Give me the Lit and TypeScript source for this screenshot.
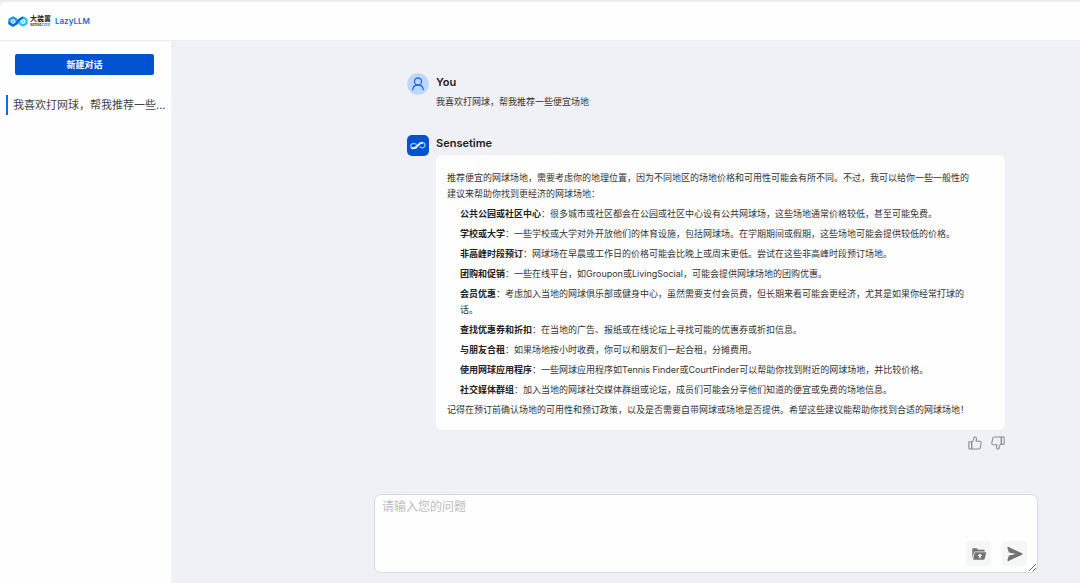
import { LitElement, html, css, svg } from "lit";
import { customElement, state } from "lit/decorators.js";

const logoMark = svg`
  <path d="M1.500 3.500 5 1.500l3.500 2v4L5 9.500l-3.500-2z" fill="#d9eefb" stroke="#1795e8" stroke-width="2.200" stroke-linejoin="round"/>
  <path d="M11.500 3.500l3.500-2 3.500 2v4l-3.500 2-3.500-2z" fill="#dcf6fb" stroke="#21c5ea" stroke-width="2.200" stroke-linejoin="round"/>
  <path d="M1.500 5.500v2l3.500 2 3.500-2 3-4 3.500-2" fill="none" stroke="#1267d8" stroke-width="2.200" stroke-linejoin="round"/>
  <circle cx="5" cy="5.500" r="1" fill="#5fa6c4"/><circle cx="15" cy="5.500" r="1" fill="#6fc6de"/>`;

const thumb = svg`
  <path d="M1 6.500h3.200v8.300H1.700a.7.7 0 0 1-.7-.7z"/>
  <path d="M4.200 6.800C6 6 6.500 4.800 6.700 3.200l.2-1.300c.2-1.300 2.400-1.100 2.700.6.2 1.100.1 2.300-.4 3.500h4.200c1.200 0 1.900.9 1.700 2l-1 5.100c-.2 1-1 1.700-2.100 1.700H4.200z"/>`;

interface Tip {
  label: string;
  text: string;
}

@customElement("chat-message")
export class ChatMessage extends LitElement {
  static properties = { name: {} };
  declare name: string;

  static styles = css`
    :host {
      display: grid;
      grid-template-columns: 22px minmax(0, 1fr);
      column-gap: 7px;
    }
    .name {
      margin: 0 0 3px;
      font-size: 11px;
      line-height: 18px;
      font-weight: 600;
      color: #1c1c1e;
    }
  `;

  render() {
    return html`
      <slot name="avatar"></slot>
      <div>
        <h2 class="name">${this.name}</h2>
        <slot></slot>
      </div>
    `;
  }
}

@customElement("app-root")
export class AppRoot extends LitElement {
  @state() private chats = ["我喜欢打网球，帮我推荐一些便宜场地"];

  private tips: Tip[] = [
    { label: "公共公园或社区中心", text: "很多城市或社区都会在公园或社区中心设有公共网球场，这些场地通常价格较低，甚至可能免费。" },
    { label: "学校或大学", text: "一些学校或大学对外开放他们的体育设施，包括网球场。在学期期间或假期，这些场地可能会提供较低的价格。" },
    { label: "非高峰时段预订", text: "网球场在早晨或工作日的价格可能会比晚上或周末更低。尝试在这些非高峰时段预订场地。" },
    { label: "团购和促销", text: "一些在线平台，如Groupon或LivingSocial，可能会提供网球场地的团购优惠。" },
    { label: "会员优惠", text: "考虑加入当地的网球俱乐部或健身中心，虽然需要支付会员费，但长期来看可能会更经济，尤其是如果你经常打球的话。" },
    { label: "查找优惠券和折扣", text: "在当地的广告、报纸或在线论坛上寻找可能的优惠券或折扣信息。" },
    { label: "与朋友合租", text: "如果场地按小时收费，你可以和朋友们一起合租，分摊费用。" },
    { label: "使用网球应用程序", text: "一些网球应用程序如Tennis Finder或CourtFinder可以帮助你找到附近的网球场地，并比较价格。" },
    { label: "社交媒体群组", text: "加入当地的网球社交媒体群组或论坛，成员们可能会分享他们知道的便宜或免费的场地信息。" },
  ];

  static styles = css`
    :host {
      display: flex;
      flex-direction: column;
      min-height: 100vh;
      box-sizing: border-box;
      border-top: 2px solid #ececee;
      background: #ececee;
      font-family: Inter, "Noto Sans CJK SC", sans-serif;
      font-size: 9px;
      line-height: 16px;
      color: #333;
    }
    * {
      box-sizing: border-box;
    }
    button,
    textarea {
      font-family: inherit;
    }
    .topbar {
      display: flex;
      align-items: center;
      height: 39px;
      padding: 0 8px;
      background: #fefefe;
      border-bottom: 1px solid #ededf0;
      border-top-left-radius: 5px;
    }
    .brand {
      display: flex;
      align-items: center;
      color: #222;
      text-decoration: none;
    }
    .mark {
      width: 20px;
      height: 11px;
      margin-right: 2px;
    }
    .vendor {
      display: flex;
      flex-direction: column;
      gap: 1px;
      width: 22px;
      font-size: 7px;
      line-height: 7px;
      font-weight: 600;
    }
    .vendor-sub {
      font-size: 4px;
      line-height: 4px;
    }
    .vendor-accent {
      color: #2a7be8;
    }
    .product {
      margin-left: 3px;
      font-size: 8px;
      line-height: 12px;
      font-weight: 600;
      color: #2368e4;
    }
    .body {
      display: flex;
      flex: 1;
    }
    .sidebar {
      flex: none;
      width: 171px;
      padding: 13px 4px 0 6px;
      background: #fefefe;
    }
    .new-chat {
      display: block;
      width: 139px;
      height: 21px;
      margin: 0 0 20px 9px;
      padding: 0;
      border: 0;
      border-radius: 2px;
      background: #0052d1;
      color: #fff;
      font-size: 9px;
      line-height: 21px;
      font-weight: 600;
    }
    .chats {
      margin: 0;
      padding: 0;
      list-style: none;
    }
    .chat {
      display: block;
      height: 20px;
      padding-left: 5px;
      border-left: 2px solid #1668f0;
      overflow: hidden;
      white-space: nowrap;
      text-overflow: ellipsis;
      font-size: 11px;
      line-height: 20px;
      color: #444;
      text-decoration: none;
    }
    .main {
      display: flex;
      flex: 1;
      flex-direction: column;
      justify-content: space-between;
      min-width: 0;
      padding: 32px 42px 10px 203px;
      background: #f0f1f6;
    }
    .thread {
      display: flex;
      flex-direction: column;
      gap: 24px;
      padding: 0 33px;
    }
    .avatar {
      width: 22px;
      height: 22px;
    }
    .text {
      margin: 0;
    }
    .card {
      padding: 15px 31px 12px 11px;
      border-radius: 6px;
      background: #fefefe;
    }
    .tips {
      margin: 4px 0;
      padding: 0 0 0 13px;
      list-style: none;
      display: flex;
      flex-direction: column;
      gap: 4px;
    }
    .label {
      font-weight: 700;
      color: #222;
    }
    .feedback {
      display: flex;
      justify-content: flex-end;
      gap: 9px;
      margin-top: 6px;
    }
    .vote {
      display: flex;
      padding: 0;
      border: 0;
      background: none;
    }
    .vote-icon {
      width: 14px;
      height: 14px;
      fill: none;
      stroke: #8b8b8e;
      stroke-width: 1.2;
      stroke-linejoin: round;
    }
    .flipped {
      transform: rotate(180deg);
    }
    .composer {
      position: relative;
      display: flex;
    }
    .input {
      flex: 1;
      min-width: 0;
      height: 79px;
      margin: 0;
      padding: 4px 7px;
      border: 1px solid #d9dbe3;
      border-radius: 7px;
      background: #fefefe;
      color: #333;
      font-size: 12px;
      line-height: 16px;
      outline: none;
    }
    .input::placeholder {
      color: #bcbcbf;
    }
    .actions {
      position: absolute;
      right: 11px;
      bottom: 7px;
      display: flex;
      gap: 11px;
    }
    .action {
      display: grid;
      place-items: center;
      width: 25px;
      height: 25px;
      padding: 0;
      border: 0;
      border-radius: 3px;
      background: #f6f6f7;
    }
    .action-icon {
      width: 16px;
      height: 16px;
      fill: #737373;
    }
  `;

  render() {
    return html`
      <header class="topbar">
        <a class="brand" href="#">
          <svg class="mark" viewBox="0 0 20 11" aria-hidden="true">${logoMark}</svg>
          <span class="vendor">
            <span>大装置</span>
            <span class="vendor-sub">sense<span class="vendor-accent">core</span></span>
          </span>
          <span class="product">LazyLLM</span>
        </a>
      </header>
      <div class="body">
        <nav class="sidebar">
          <button class="new-chat" type="button">新建对话</button>
          <ul class="chats">
            ${this.chats.map((c) => html`<li><a class="chat" href="#">${c}</a></li>`)}
          </ul>
        </nav>
        <main class="main">
          <div class="thread">
            <chat-message name="You">
              <svg slot="avatar" class="avatar" viewBox="0 0 22 22" aria-hidden="true">
                <circle cx="11" cy="11" r="10.8" fill="#bbd7fd" />
                <g fill="none" stroke="#2468df" stroke-width="1.3" stroke-linecap="round">
                  <circle cx="11" cy="8.5" r="3.5" />
                  <path d="M5.7 16.7c.3-2.900 2.300-4.700 5.300-4.700s5 1.800 5.300 4.700" />
                </g>
              </svg>
              <p class="text">我喜欢打网球，帮我推荐一些便宜场地</p>
            </chat-message>
            <chat-message name="Sensetime">
              <svg slot="avatar" class="avatar" viewBox="0 0 22 22" aria-hidden="true">
                <rect y="1" width="22" height="21" rx="5" fill="#0052d1" />
                <g fill="none" stroke-linecap="round">
                  <path d="M10 13.400c-2 1.700-6.200 1.400-6.300-1.400-.1-2.500 3.200-3.500 5.400-1.700" stroke="#8fc4f5" stroke-width="1.3" />
                  <path d="M12.600 12.800c2.200 1.900 5.600.9 5.500-1.500-.1-1.700-1.600-2.600-3.200-2.600" stroke="#8fc4f5" stroke-width="1.2" />
                  <path d="M5 14.200c4.500 1.500 6.300-5.300 10-5.500" stroke="#fff" stroke-width="1.8" />
                </g>
              </svg>
              <div class="card">
                <p class="text">推荐便宜的网球场地，需要考虑你的地理位置，因为不同地区的场地价格和可用性可能会有所不同。不过，我可以给你一些一般性的建议来帮助你找到更经济的网球场地：</p>
                <ul class="tips">
                  ${this.tips.map((t) => html`<li><strong class="label">${t.label}</strong>：${t.text}</li>`)}
                </ul>
                <p class="text">记得在预订前确认场地的可用性和预订政策，以及是否需要自带网球或场地是否提供。希望这些建议能帮助你找到合适的网球场地！</p>
              </div>
              <div class="feedback">
                <button class="vote" type="button" aria-label="赞">
                  <svg class="vote-icon" viewBox="0 0 16 16">${thumb}</svg>
                </button>
                <button class="vote" type="button" aria-label="踩">
                  <svg class="vote-icon flipped" viewBox="0 0 16 16">${thumb}</svg>
                </button>
              </div>
            </chat-message>
          </div>
          <form class="composer" @submit=${(e: Event) => e.preventDefault()}>
            <textarea class="input" aria-label="请输入您的问题" placeholder="请输入您的问题"></textarea>
            <div class="actions">
              <button class="action" type="button" aria-label="上传文件">
                <svg class="action-icon" viewBox="0 0 16 16">
                  <path d="M1.300 12.200V3.200c0-.6.4-1 1-1h3.400l1.500 1.500h5.500c.6 0 1 .4 1 1v.8H4.200c-.5 0-.9.3-1.100.8z" />
                  <path fill-rule="evenodd" d="M4.500 6.200h9.900c.5 0 .8.4.7.9l-1.500 5.900c-.1.500-.5.800-1 .8H3.100c-.6 0-.9-.5-.8-1l1.300-5.900c.1-.4.4-.7.9-.7zM8.900 7.400 6.500 9.900h1.600v2.400h1.600V9.900h1.600z" />
                </svg>
              </button>
              <button class="action" type="submit" aria-label="发送">
                <svg class="action-icon" viewBox="0 0 16 16">
                  <path d="M1.600.9c-.7-.3-1.400.3-1.200 1l1.500 4.700 6.100 1.100v.6L1.900 9.400.4 14.100c-.2.7.5 1.300 1.200 1l13.400-6.400c.7-.3.7-1.100 0-1.400z" />
                </svg>
              </button>
            </div>
          </form>
        </main>
      </div>
    `;
  }
}
